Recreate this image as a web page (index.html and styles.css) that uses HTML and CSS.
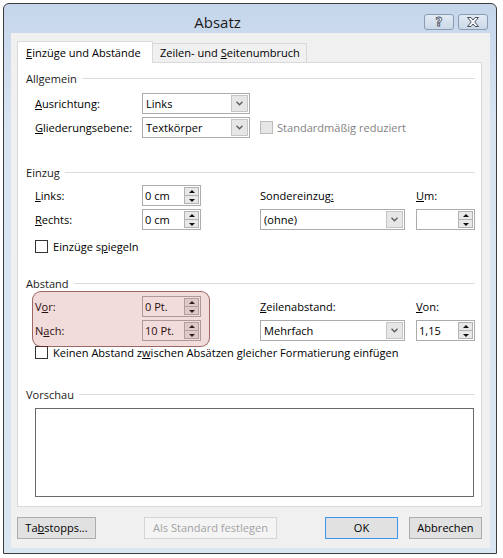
FILE: index.html
```html
<!DOCTYPE html>
<html lang="de">
<head>
<meta charset="utf-8">
<title>Absatz</title>
<link rel="stylesheet" href="styles.css">
</head>
<body>
<div class="window">
  <div class="titlebar">
    <div class="title">Absatz</div>
    <div class="tbtns">
      <span class="tbtn help">?</span>
      <span class="tbtn close">
        <svg width="14" height="10" viewBox="0 0 14 10"><path d="M1.5 0.5 H5 L7 3 L9 0.5 H12.5 L8.8 5 L12.5 9.5 H9 L7 7 L5 9.5 H1.5 L5.2 5 Z" fill="#f4f6f9" stroke="#4a5260" stroke-width="1" stroke-linejoin="round"/></svg>
      </span>
    </div>
  </div>
  <div class="client">
    <div class="tabs">
      <div class="tab active"><u>E</u>inzüge und Abstände</div>
      <div class="tab">Zeilen- und <u>S</u>eitenumbruch</div>
    </div>
    <div class="panel">
      <div class="group">
        <div class="gh"><span>Allgemein</span></div>
        <div class="rows r-allg">
          <div class="row">
            <span class="lbl"><u>A</u>usrichtung:</span>
            <div class="select w108"><span class="val">Links</span><span class="dd"><svg width="7" height="5" viewBox="0 0 7 5"><path d="M0.5 0.8 L3.5 3.8 L6.5 0.8" fill="none" stroke="#5a5a5a" stroke-width="1.3"/></svg></span></div>
          </div>
          <div class="row">
            <span class="lbl"><u>G</u>liederungsebene:</span>
            <div class="select w108"><span class="val">Textkörper</span><span class="dd"><svg width="7" height="5" viewBox="0 0 7 5"><path d="M0.5 0.8 L3.5 3.8 L6.5 0.8" fill="none" stroke="#5a5a5a" stroke-width="1.3"/></svg></span></div>
            <span class="chk disabled"><span class="box"></span><span>Standardmäßig reduziert</span></span>
          </div>
        </div>
      </div>

      <div class="group g-einzug">
        <div class="gh"><span>Einzug</span></div>
        <div class="grid">
          <span class="lbl"><u>L</u>inks:</span>
          <div class="spin"><span class="val">0 cm</span><span class="sb"><i class="up"></i><i class="dn"></i></span></div>
          <span></span>
          <span class="lbl">Sondereinzu<u>g:</u></span>
          <span></span>
          <span class="lbl"><u>U</u>m:</span>

          <span class="lbl"><u>R</u>echts:</span>
          <div class="spin"><span class="val">0 cm</span><span class="sb"><i class="up"></i><i class="dn"></i></span></div>
          <span></span>
          <div class="select"><span class="val">(ohne)</span><span class="dd"><svg width="7" height="5" viewBox="0 0 7 5"><path d="M0.5 0.8 L3.5 3.8 L6.5 0.8" fill="none" stroke="#5a5a5a" stroke-width="1.3"/></svg></span></div>
          <span></span>
          <div class="spin"><span class="val"></span><span class="sb"><i class="up"></i><i class="dn"></i></span></div>
        </div>
        <span class="chk c-spiegeln"><span class="box"></span><span>Einzüge s<u>p</u>iegeln</span></span>
      </div>

      <div class="group g-abstand">
        <div class="gh"><span>Abstand</span></div>
        <div class="grid">
          <span class="lbl">V<u>o</u>r:</span>
          <div class="spin"><span class="val">0 Pt.</span><span class="sb"><i class="up"></i><i class="dn"></i></span></div>
          <span></span>
          <span class="lbl"><u>Z</u>eilenabstand:</span>
          <span></span>
          <span class="lbl"><u>V</u>on:</span>

          <span class="lbl">N<u>a</u>ch:</span>
          <div class="spin"><span class="val">10 Pt.</span><span class="sb"><i class="up"></i><i class="dn"></i></span></div>
          <span></span>
          <div class="select"><span class="val">Mehrfach</span><span class="dd"><svg width="7" height="5" viewBox="0 0 7 5"><path d="M0.5 0.8 L3.5 3.8 L6.5 0.8" fill="none" stroke="#5a5a5a" stroke-width="1.3"/></svg></span></div>
          <span></span>
          <div class="spin"><span class="val">1,15</span><span class="sb"><i class="up"></i><i class="dn"></i></span></div>
        </div>
        <span class="chk c-keinen"><span class="box"></span><span>Keinen Abstand z<u>w</u>ischen Absätzen gleicher Formatierung einfügen</span></span>
        <div class="highlight"></div>
      </div>

      <div class="group g-vorschau">
        <div class="gh"><span>Vorschau</span></div>
        <div class="preview"></div>
      </div>
    </div>
    <div class="buttons">
      <span class="btn b-tab">Ta<u>b</u>stopps...</span>
      <span class="btn b-std disabled">Als Standard festlegen</span>
      <span class="btn b-ok default">OK</span>
      <span class="btn b-cancel">Abbrechen</span>
    </div>
  </div>
</div>
</body>
</html>
```

FILE: styles.css
```css
* { box-sizing: border-box; }
html, body { margin: 0; padding: 0; background: #ffffff; }
body {
  font-family: "Open Sans", "Noto Sans", "Liberation Sans", sans-serif;
  font-size: 11.05px;
  color: #000;
}
u { text-decoration: underline; text-underline-offset: 1px; }

.window {
  margin: 3px 0 0 3px;
  width: 494px;
  height: 551px;
  border: 1px solid #3e3e3e;
  border-radius: 6px 6px 0 0;
  background: linear-gradient(#c6d6ea 0px, #cad9ec 30px, #d8e4f2 120px, #dbe6f3 100%);
  display: flex;
  flex-direction: column;
}

.titlebar {
  height: 29px;
  display: flex;
  align-items: flex-start;
  padding-right: 8px;
}
.title {
  flex: 1;
  text-align: center;
  font-size: 15px;
  line-height: 20px;
  padding-top: 8px;
  padding-left: 7px;
  color: #1b1b1b;
}
.tbtns { display: flex; gap: 4px; padding-top: 10px; }
.tbtn {
  width: 30px;
  height: 16px;
  border: 1px solid #8a9cb3;
  border-radius: 3px;
  background: linear-gradient(#e3ebf4, #cbd8e8);
  display: flex;
  align-items: center;
  justify-content: center;
}
.tbtn.help {
  font-family: "DejaVu Sans", sans-serif;
  font-weight: bold;
  font-size: 12px;
  line-height: 14px;
  color: #f4f6f9;
  -webkit-text-stroke: 0.8px #4a5260;
}

.client {
  margin: 0 6px 0 7px;
  height: 515px;
  background: #f0f0f0;
  padding: 8px 8px 0 6px;
}

.tabs { display: flex; align-items: flex-end; height: 21px; position: relative; z-index: 2; }
.tab {
  height: 19px;
  line-height: 17px;
  padding-left: 7px;
  border: 1px solid #d9d9d9;
  border-bottom: none;
  background: #f0f0f0;
  width: 154px;
  border-left: none;
}
.tab.active {
  width: 136px;
  height: 22px;
  margin-bottom: -1px;
  border-left: 1px solid #d9d9d9;
  background: #fff;
  line-height: 21px;
  padding-left: 8px;
}

.panel {
  width: 465px;
  height: 445px;
  border: 1px solid #d9d9d9;
  background: #fff;
  padding: 8px 6px 0 8px;
  position: relative;
}

.gh { display: flex; align-items: center; height: 16px; line-height: 16px; color: #1a1a1a; }
.gh::after { content: ""; flex: 1; height: 1px; background: #dcdcdc; margin-left: 5px; margin-top: -1px; }

.rows { padding-left: 9px; margin-top: 6px; display: flex; flex-direction: column; gap: 3px; }
.row { display: flex; align-items: center; height: 21px; }
.row .lbl { width: 107px; }

.lbl { line-height: 21px; white-space: nowrap; }

.select {
  height: 21px;
  border: 1px solid #acacac;
  background: #fff;
  display: flex;
  align-items: stretch;
}
.select.w108 { width: 108px; }
.select .val { flex: 1; padding-left: 3px; line-height: 19px; }
.select .dd {
  width: 17px;
  margin: 1px;
  border: 1px solid #c5c5c5;
  background: #e6e6e6;
  display: flex;
  align-items: center;
  justify-content: center;
}

.spin {
  height: 21px;
  border: 1px solid #acacac;
  background: #fff;
  display: flex;
}
.spin .val { flex: 1; padding-left: 2px; line-height: 19px; }
.spin .sb { width: 15px; margin: 1px 1px 1px 0; display: flex; flex-direction: column; }
.spin .sb i {
  flex: 1;
  display: block;
  border: 1px solid #b2b2b2;
  background: #e8e8e8;
  position: relative;
}
.spin .sb i.dn { border-top: none; }
.spin .sb i::after {
  content: "";
  position: absolute;
  left: 50%;
  top: 50%;
  margin-left: -3px;
  border-left: 3px solid transparent;
  border-right: 3px solid transparent;
}
.spin .sb i.up::after { border-bottom: 3px solid #111; margin-top: -2px; }
.spin .sb i.dn::after { border-top: 3px solid #111; margin-top: -1px; }

.chk { display: flex; align-items: center; gap: 5px; height: 13px; white-space: nowrap; }
.chk .box { width: 13px; height: 13px; border: 1px solid #333; background: #fff; flex: none; }
.row .chk { margin-left: 10px; gap: 4px; }
.chk.disabled { color: #838383; }
.chk.disabled .box { border-color: #bcbcbc; background: #e6e6e6; }

.group { position: relative; }
.g-einzug { margin-top: 27px; }
.g-abstand { margin-top: 23px; }
.g-vorschau { margin-top: 28px; }

.grid {
  display: grid;
  grid-template-columns: 107px 59px 59px 145px 11px 59px;
  grid-template-rows: 21px 21px;
  row-gap: 3px;
  padding-left: 9px;
  margin-top: 4px;
  align-items: center;
}
.c-spiegeln { margin: 10px 0 0 9px; }
.c-keinen { margin: 5px 0 0 9px; }

.highlight {
  position: absolute;
  left: 6px;
  top: 15px;
  width: 178px;
  height: 56px;
  border: 1px solid rgba(110, 40, 35, 0.65);
  border-radius: 9px;
  background: rgba(190, 80, 75, 0.2);
  pointer-events: none;
}

.preview {
  margin: 5px 0 0 9px;
  width: 439px;
  height: 89px;
  border: 1px solid #6a6a6a;
  background: #fff;
}

.buttons { display: flex; margin-top: 10px; }
.btn {
  height: 22px;
  line-height: 20px;
  text-align: center;
  border: 1px solid #adadad;
  background: #e1e1e1;
  white-space: nowrap;
}
.b-tab { width: 79px; }
.b-std { width: 133px; margin-left: 48px; }
.b-ok { width: 73px; margin-left: 48px; }
.b-cancel { width: 73px; margin-left: 11px; }
.btn.disabled { background: #f4f4f4; border-color: #d5d5d5; color: #a3a3a3; }
.btn.default { border-color: #3c97ef; }
```
